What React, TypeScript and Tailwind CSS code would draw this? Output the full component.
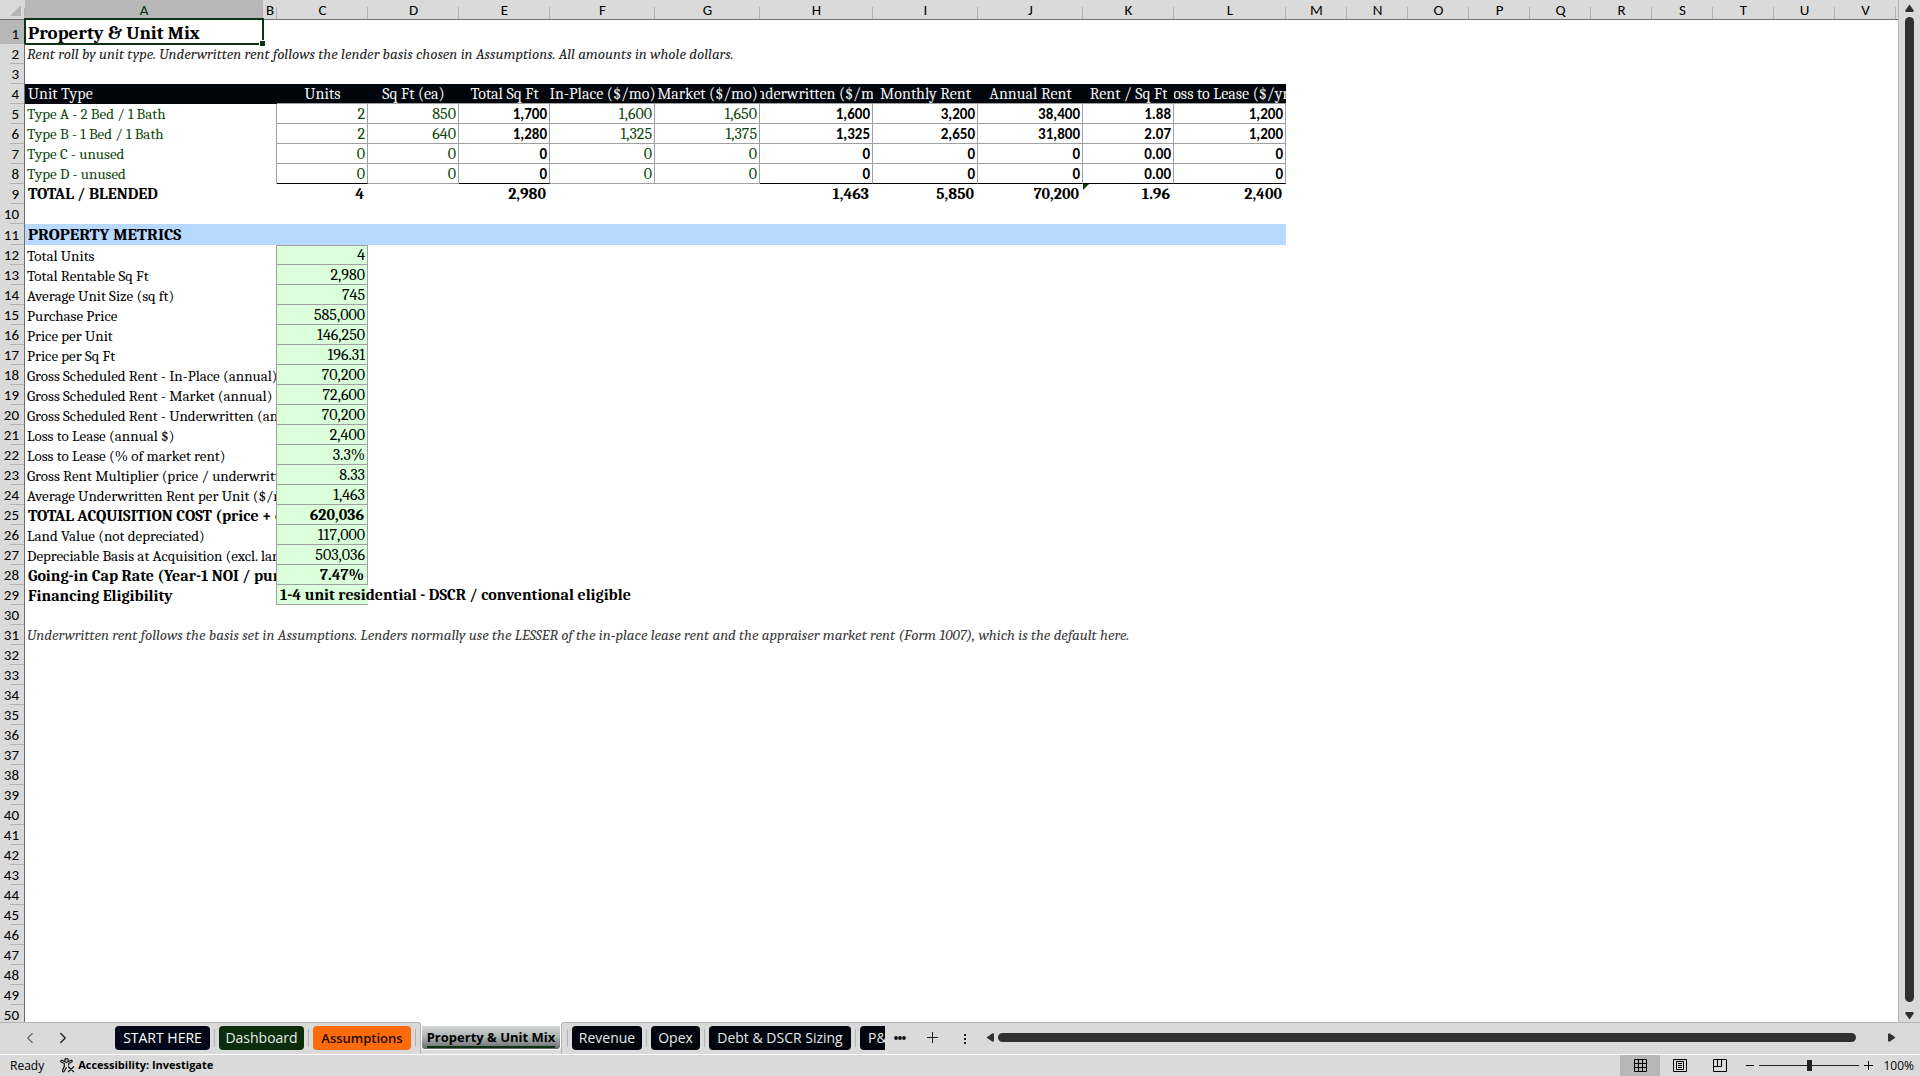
import { clsx } from 'clsx'
import { ChevronLeft, ChevronRight } from 'lucide-react'

const COLUMNS = [
  { name: 'A', width: 'w-[238px]' },
  { name: 'B', width: 'w-[14px]' },
  { name: 'C', width: 'w-[91px]' },
  { name: 'D', width: 'w-[91px]' },
  { name: 'E', width: 'w-[91px]' },
  { name: 'F', width: 'w-[105px]' },
  { name: 'G', width: 'w-[105px]' },
  { name: 'H', width: 'w-[113px]' },
  { name: 'I', width: 'w-[105px]' },
  { name: 'J', width: 'w-[105px]' },
  { name: 'K', width: 'w-[91px]' },
  { name: 'L', width: 'w-[112px]' },
  ...['M', 'N', 'O', 'P', 'Q', 'R', 'S', 'T', 'U', 'V'].map((name) => ({ name, width: 'w-[61px]' })),
]

const UNIT_HEADERS = [
  'Units',
  'Sq Ft (ea)',
  'Total Sq Ft',
  'In-Place ($/mo)',
  'Market ($/mo)',
  'Underwritten ($/mo)',
  'Monthly Rent',
  'Annual Rent',
  'Rent / Sq Ft',
  'Loss to Lease ($/yr)',
]

const UNIT_ROWS = [
  { label: 'Type A - 2 Bed / 1 Bath', values: ['2', '850', '1,700', '1,600', '1,650', '1,600', '3,200', '38,400', '1.88', '1,200'] },
  { label: 'Type B - 1 Bed / 1 Bath', values: ['2', '640', '1,280', '1,325', '1,375', '1,325', '2,650', '31,800', '2.07', '1,200'] },
  { label: 'Type C - unused', values: ['0', '0', '0', '0', '0', '0', '0', '0', '0.00', '0'] },
  { label: 'Type D - unused', values: ['0', '0', '0', '0', '0', '0', '0', '0', '0.00', '0'] },
]

// Units, Sq Ft, In-Place and Market are typed in, everything else is a formula
const INPUT_COLUMNS = [0, 1, 3, 4]

const TOTALS = ['4', '', '2,980', '', '', '1,463', '5,850', '70,200', '1.96', '2,400']

const METRICS = [
  { label: 'Total Units', value: '4' },
  { label: 'Total Rentable Sq Ft', value: '2,980' },
  { label: 'Average Unit Size (sq ft)', value: '745' },
  { label: 'Purchase Price', value: '585,000' },
  { label: 'Price per Unit', value: '146,250' },
  { label: 'Price per Sq Ft', value: '196.31' },
  { label: 'Gross Scheduled Rent - In-Place (annual)', value: '70,200' },
  { label: 'Gross Scheduled Rent - Market (annual)', value: '72,600' },
  { label: 'Gross Scheduled Rent - Underwritten (annual)', value: '70,200' },
  { label: 'Loss to Lease (annual $)', value: '2,400' },
  { label: 'Loss to Lease (% of market rent)', value: '3.3%' },
  { label: 'Gross Rent Multiplier (price / underwritten rent)', value: '8.33' },
  { label: 'Average Underwritten Rent per Unit ($/mo)', value: '1,463' },
  { label: 'TOTAL ACQUISITION COST (price + closing)', value: '620,036', bold: true },
  { label: 'Land Value (not depreciated)', value: '117,000' },
  { label: 'Depreciable Basis at Acquisition (excl. land)', value: '503,036' },
  { label: 'Going-in Cap Rate (Year-1 NOI / purchase price)', value: '7.47%', bold: true },
]

const LEFT_TABS = [
  { name: 'START HERE', className: 'w-[95px] bg-[#020817] text-[14px] text-white' },
  { name: 'Dashboard', className: 'w-[85px] bg-[#0b2d0b] text-[14px] text-[#e3efe3]' },
  { name: 'Assumptions', className: 'w-[98px] bg-[#ff6a0a] text-[13px] font-semibold text-[#1c0d02]' },
]

const RIGHT_TABS = [
  { name: 'Revenue', className: 'w-[70px] bg-[#02050c] text-[14px] text-[#e4e9ef]' },
  { name: 'Opex', className: 'w-[49px] bg-[#02050c] text-[14px] text-[#e4e9ef]' },
  { name: 'Debt & DSCR Sizing', className: 'w-[142px] bg-[#02050c] text-[14px] text-[#e4e9ef]' },
]

function RowHeader({ n, selected }: { n: number; selected?: boolean }) {
  return (
    <th
      scope="row"
      className={clsx(
        'relative border-r border-[#6e6e6e] p-0 pr-[5px] text-right align-bottom font-[Calibri,Carlito,"Noto_Sans",sans-serif] text-[15px] leading-[19px] font-normal text-black',
        selected ? 'bg-[#b7b7b7]' : 'bg-[#dadada]',
      )}
    >
      {n}
      <span className="absolute right-0 bottom-0 h-px w-3.5 bg-[#b3b3b3]" />
    </th>
  )
}

function Sheet() {
  return (
    <table className="w-full table-fixed border-separate border-spacing-0 whitespace-nowrap text-black">
      <colgroup>
        <col className="w-[25px]" />
        {COLUMNS.map((c) => (
          <col key={c.name} className={c.width} />
        ))}
        <col />
      </colgroup>
      <thead>
        <tr className="h-5">
          <td className="border-b border-[#6e6e6e] bg-[#dadada] p-0">
            <svg viewBox="0 0 25 19" className="block h-[19px] w-[25px]">
              <path d="M21 5v11H10z" fill="#b5b5b5" />
              <path d="M24.5 8v11" stroke="#b3b3b3" />
            </svg>
          </td>
          {COLUMNS.map((c) => (
            <th
              key={c.name}
              scope="col"
              className={clsx(
                'relative border-b border-[#6e6e6e] p-0 pt-0.5 font-[Calibri,Carlito,"Noto_Sans",sans-serif] text-[15px] leading-[17px] font-normal',
                c.name === 'A' ? 'bg-[#b7b7b7] text-[#0b3316]' : 'bg-[#dadada]',
              )}
            >
              {c.name}
              <span className="absolute right-0 bottom-0 h-3 w-px bg-[#b3b3b3]" />
            </th>
          ))}
          <td className="border-b border-[#6e6e6e] bg-[#dadada] p-0" />
        </tr>
      </thead>
      <tbody className="text-[15px] leading-[18px]">
        <tr className="h-6">
          <RowHeader n={1} selected />
          <td className="relative p-0 pt-px pl-[3px] text-[19px] leading-[22px] font-bold">
            Property &amp; Unit Mix
            <span className="absolute -top-0.5 -right-px -bottom-px -left-px border-2 border-[#0b3316]" />
            <span className="absolute -right-0.5 -bottom-0.5 size-1.5 border-t border-l border-white bg-[#0b3316]" />
          </td>
          <td colSpan={22} />
        </tr>
        <tr className="h-5">
          <RowHeader n={2} />
          <td colSpan={23} className="p-0 pl-0.5 text-[#262626] italic">
            Rent roll by unit type. Underwritten rent follows the lender basis chosen in Assumptions. All amounts in whole dollars.
          </td>
        </tr>
        <tr className="h-5">
          <RowHeader n={3} />
          <td colSpan={23} />
        </tr>
        <tr className="h-5 text-[16px] text-[#f1f3f6]">
          <RowHeader n={4} />
          <th colSpan={2} className="bg-[#02050c] p-0 pl-[3px] text-left font-normal">
            Unit Type
          </th>
          {UNIT_HEADERS.map((h) => (
            <th key={h} scope="col" className="border-b border-[#a0a0a0] bg-[#02050c] p-0 pt-px font-normal">
              <div className="flex justify-center overflow-hidden">{h}</div>
            </th>
          ))}
          <td colSpan={11} />
        </tr>
        {UNIT_ROWS.map((row, r) => (
          <tr key={row.label} className="h-5">
            <RowHeader n={5 + r} />
            <td className="p-0 pl-0.5 text-[#0d470d]">{row.label}</td>
            <td className="border-r border-[#a0a0a0] p-0" />
            {row.values.map((value, i) => (
              <td
                key={i}
                className={clsx(
                  'border-r border-b border-r-[#a0a0a0] p-0 pt-px pr-0.5 text-right',
                  INPUT_COLUMNS.includes(i)
                    ? 'text-[16px] text-[#0d470d]'
                    : 'font-[Calibri,Carlito,"Noto_Sans",sans-serif] font-bold',
                  r === UNIT_ROWS.length - 1 && TOTALS[i] ? 'border-b-black' : 'border-b-[#a0a0a0]',
                )}
              >
                {value}
              </td>
            ))}
            <td colSpan={11} />
          </tr>
        ))}
        <tr className="h-5 text-[16px] font-bold">
          <RowHeader n={9} />
          <td colSpan={2} className="p-0 pl-[3px]">
            TOTAL / BLENDED
          </td>
          {TOTALS.map((value, i) => (
            <td key={i} className="relative p-0 pr-1 text-right">
              {value}
              {i === 8 && (
                <svg viewBox="0 0 6 6" className="absolute top-0 left-0 size-1.5">
                  <path d="M0 0h6L0 6z" fill="#0b3d0b" />
                </svg>
              )}
            </td>
          ))}
          <td colSpan={11} />
        </tr>
        <tr className="h-5">
          <RowHeader n={10} />
          <td colSpan={23} />
        </tr>
        <tr className="h-[21px]">
          <RowHeader n={11} />
          <th colSpan={12} className="bg-[#b8d9ff] p-0 pt-px pl-[3px] text-left text-[17px] font-bold">
            PROPERTY METRICS
          </th>
          <td colSpan={11} />
        </tr>
        {METRICS.map((m, i) => (
          <tr key={m.label} className={clsx('h-5', m.bold && 'text-[16px] font-bold')}>
            <RowHeader n={12 + i} />
            <td colSpan={2} className={clsx('overflow-hidden border-r border-[#a0a0a0] p-0 pt-px', m.bold ? 'pl-[3px]' : 'pl-0.5')}>
              {m.label}
            </td>
            <td
              className={clsx(
                'border-r border-b border-[#a0a0a0] bg-[#daffda] p-0 text-right text-[16px]',
                i === 0 ? 'border-t' : 'pt-px',
                m.bold ? 'pr-[3px]' : 'pr-0.5',
              )}
            >
              {m.value}
            </td>
            <td colSpan={20} />
          </tr>
        ))}
        <tr className="h-5 text-[16px] font-bold">
          <RowHeader n={29} />
          <td colSpan={2} className="border-r border-[#a0a0a0] p-0 pt-px pl-[3px]">
            Financing Eligibility
          </td>
          <td className="border-b border-[#a0a0a0] bg-[#daffda] p-0 pt-px pl-[3px]">1-4 unit residential - DSCR / conventional eligible</td>
          <td colSpan={20} />
        </tr>
        <tr className="h-5">
          <RowHeader n={30} />
          <td colSpan={23} />
        </tr>
        <tr className="h-5">
          <RowHeader n={31} />
          <td colSpan={23} className="p-0 pl-0.5 text-[#3a3a3a] italic">
            Underwritten rent follows the basis set in Assumptions. Lenders normally use the LESSER of the in-place lease rent and the appraiser market rent (Form 1007), which is the default here.
          </td>
        </tr>
        {Array.from({ length: 19 }, (_, i) => (
          <tr key={i} className="h-5">
            <RowHeader n={32 + i} />
            <td colSpan={23} />
          </tr>
        ))}
      </tbody>
    </table>
  )
}

function VerticalScrollbar() {
  return (
    <div className="flex w-[21px] shrink-0 flex-col items-center pt-1">
      <button type="button" aria-label="Scroll up">
        <svg viewBox="0 0 9 8" className="block h-2 w-[9px]" fill="#303030">
          <path d="M4.500 0.500 8.800 6.500 8.300 8H.7L.2 6.500z" />
        </svg>
      </button>
      <div className="mt-[5px] w-[9px] flex-1 rounded-full bg-[#303030]" />
      <button type="button" aria-label="Scroll down" className="mt-2.5 mb-0.5">
        <svg viewBox="0 0 9 8" className="block h-2 w-[9px]" fill="#303030">
          <path d="M4.500 7.500 8.800 1.500 8.300 0H.7L.2 1.500z" />
        </svg>
      </button>
    </div>
  )
}

function TabDivider() {
  return <span className="mx-1 h-[18px] w-px bg-[#b3b3b3]" />
}

function TabBar() {
  return (
    <div className="flex h-[33px] border-b border-white">
      <div className="flex items-center border-t border-[#b3b3b3] pb-0.5">
        <button type="button" aria-label="Previous sheet" className="ml-5 text-[#6b6b6b]">
          <ChevronLeft className="h-[18px] w-5" strokeWidth={1.5} />
        </button>
        <button type="button" aria-label="Next sheet" className="mr-[42px] ml-[13px] text-[#222]">
          <ChevronRight className="h-[18px] w-5" strokeWidth={1.8} />
        </button>
        {LEFT_TABS.map((tab) => (
          <div key={tab.name} className="flex items-center">
            <button type="button" className={clsx('h-6 rounded leading-6', tab.className)}>
              {tab.name}
            </button>
            <TabDivider />
          </div>
        ))}
      </div>
      {/* the open tab hangs from the sheet, so the strip around it stays white */}
      <div className="-ml-0.5 flex w-[146px] bg-white">
        <span className="w-[3px] rounded-tr-sm border-t border-r border-[#b3b3b3] bg-[#dadada]" />
        <div className="flex-1 bg-[#dadada]">
          <div className="h-1 bg-white" />
          <button
            type="button"
            aria-current="page"
            className="block h-6 w-full rounded-b border-x border-b border-white bg-linear-to-b from-[#d6d6d6] via-[#a9b1b1] to-[#686868] px-[5px] text-[13px] leading-[18px] font-bold whitespace-nowrap text-black"
          >
            <span className="flex justify-center border-b-2 border-[#0b3316]">{'Property & Unit Mix'}</span>
          </button>
        </div>
        <span className="w-[3px] rounded-tl-sm border-t border-l border-[#b3b3b3] bg-[#dadada]" />
      </div>
      <div className="-ml-px flex flex-1 items-center border-t border-[#b3b3b3] pb-0.5">
        {RIGHT_TABS.map((tab) => (
          <div key={tab.name} className="flex items-center">
            <TabDivider />
            <button type="button" className={clsx('h-6 rounded leading-6', tab.className)}>
              {tab.name}
            </button>
          </div>
        ))}
        <TabDivider />
        <button type="button" className="h-6 w-[25px] overflow-hidden rounded-l bg-[#02050c] pl-2 text-left text-[14px] leading-6 text-[#e4e9ef]">
          P&amp;L
        </button>
        <button type="button" aria-label="More sheets" className="ml-[9px]">
          <svg viewBox="0 0 12 4" className="block h-1 w-3" fill="#111">
            <circle cx="2" cy="2" r="1.900" />
            <circle cx="6" cy="2" r="1.900" />
            <circle cx="10" cy="2" r="1.900" />
          </svg>
        </button>
        <button type="button" aria-label="New sheet" className="ml-5">
          <svg viewBox="0 0 13 13" className="block size-[13px]" stroke="#222">
            <path d="M6.500 1v11M1 6.500h11" />
          </svg>
        </button>
        <span className="mt-0.5 ml-[25px] flex flex-col gap-0.5">
          <i className="size-0.5 bg-[#222]" />
          <i className="size-0.5 bg-[#222]" />
          <i className="size-0.5 bg-[#222]" />
        </span>
        <button type="button" aria-label="Scroll left" className="ml-5">
          <svg viewBox="0 0 8 9" className="block h-[9px] w-2" fill="#303030">
            <path d="M.5 4.500 6.500.2 8 .7v7.600l-1.500.5z" />
          </svg>
        </button>
        <div className="ml-1 h-[9px] flex-1 rounded-full bg-[#303030]" />
        <button type="button" aria-label="Scroll right" className="mr-6 ml-8">
          <svg viewBox="0 0 8 9" className="block h-[9px] w-2" fill="#303030">
            <path d="M7.500 4.500 1.500.2 0 .7v7.600l1.500.5z" />
          </svg>
        </button>
      </div>
    </div>
  )
}

function StatusBar() {
  return (
    <div className="flex h-[21px] items-center pr-1.5 text-[12px] text-black">
      <span className="ml-2.5">Ready</span>
      <button type="button" className="ml-4 flex items-center gap-[3px] text-[11px] font-bold">
        <svg viewBox="0 0 15 15" className="size-[15px]" fill="none" stroke="#111" strokeWidth="1.200">
          <circle cx="6.500" cy="2.500" r="1.800" />
          <path d="M4.800 3.700 2 2.300C.8 2 .3 3.500 1.300 4L4.300 5.500v2.800L2.500 12.500c-.3 1.300 1.200 1.800 1.800.8L6.500 9.300M8.200 3.700 11 2.300c1.200-.3 1.700 1.200.7 1.700L8.700 5.500v2M8 8.500l6 5.500M14 8.500 8 14" />
        </svg>
        Accessibility: Investigate
      </button>
      <div className="ml-auto flex h-full">
        <button type="button" aria-label="Normal view" className="flex w-10 items-center justify-center bg-[#b7b7b7]">
          <svg viewBox="0 0 13 13" className="size-[13px]" fill="none" stroke="#000">
            <path d="M.5.5h12v12H.5zM4.500.5v12M8.500.5v12M.5 4.500h12M.5 8.500h12" />
          </svg>
        </button>
        <button type="button" aria-label="Page layout view" className="flex w-10 items-center justify-center">
          <svg viewBox="0 0 14 13" className="h-[13px] w-3.5" fill="none" stroke="#000">
            <path d="M.5.5h13v12H.5zM3.500 2.500h7v8h-7zM5 4.500h4M5 6.500h4M5 8.500h4" />
          </svg>
        </button>
        <button type="button" aria-label="Page break preview" className="flex w-10 items-center justify-center">
          <svg viewBox="0 0 14 13" className="h-[13px] w-3.5" fill="none" stroke="#000">
            <path d="M.5.5h13v12H.5zM.5 7.500h8V.5M4.500.5v7" />
          </svg>
        </button>
      </div>
      <button type="button" aria-label="Zoom out" className="ml-1.5">
        <svg viewBox="0 0 8 9" className="block h-[9px] w-2" stroke="#111">
          <path d="M0 4.500h8" />
        </svg>
      </button>
      <input
        type="range"
        aria-label="Zoom"
        min={0}
        max={100}
        defaultValue={50}
        className="mx-[5px] h-[11px] w-[100px] appearance-none bg-linear-to-r from-[#222] to-[#222] bg-size-[100%_1px] bg-center bg-no-repeat [&::-webkit-slider-thumb]:h-[11px] [&::-webkit-slider-thumb]:w-[5px] [&::-webkit-slider-thumb]:appearance-none [&::-webkit-slider-thumb]:bg-[#222]"
      />
      <button type="button" aria-label="Zoom in">
        <svg viewBox="0 0 9 9" className="block size-[9px]" stroke="#111">
          <path d="M0 4.500h9M4.500 0v9" />
        </svg>
      </button>
      <span className="ml-2.5">100%</span>
    </div>
  )
}

export default function App() {
  return (
    <div className="flex h-screen flex-col overflow-hidden bg-[#dadada] font-['Open_Sans','Noto_Sans',sans-serif]">
      <div className="flex min-h-0 flex-1">
        <main className="min-w-0 flex-1 overflow-hidden border-r border-[#b3b3b3] bg-white font-[Cambria,Caladea,'Liberation_Serif',serif]">
          <Sheet />
        </main>
        <VerticalScrollbar />
      </div>
      <TabBar />
      <StatusBar />
    </div>
  )
}
